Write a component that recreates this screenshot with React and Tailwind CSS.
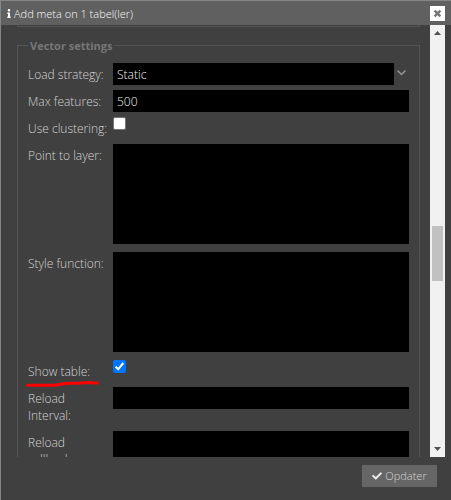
import React from "react";
import { FaInfo, FaCheck } from "react-icons/fa";

function Row({ label, height, children }) {
  return (
    <div className={`flex shrink-0 items-start ${height}`}>
      <div className="w-[85px] shrink-0 pt-[3px] pr-1 leading-[17px]">{label}</div>
      {children}
    </div>
  );
}

function Field({ value, className = "h-[22px] w-[296px]" }) {
  return <div className={`bg-black px-1 leading-[23px] text-[#f0f0f0] ${className}`}>{value}</div>;
}

function Checkbox({ checked }) {
  return (
    <div
      className={`size-[13px] rounded-[2px] ${checked ? "bg-[#0075ff]" : "border border-[#767676] bg-white"}`}
    >
      {checked && (
        <svg viewBox="0 0 13 13" className="block size-[13px]">
          <path d="M2.6 6.6 L5.2 9.3 L10.3 3" fill="none" stroke="#fff" strokeWidth="2" />
        </svg>
      )}
    </div>
  );
}

function Scrollbar() {
  return (
    <div className="flex h-[432px] w-[15px] shrink-0 flex-col items-center bg-[#f1f1f1]">
      <svg viewBox="0 0 15 15" className="size-[15px] shrink-0">
        <path d="M4 10 L7.5 6 L11 10 Z" fill="#505050" />
      </svg>
      <div className="mt-[186px] -ml-px h-[55px] w-[11px] bg-[#c1c1c1]" />
      <svg viewBox="0 0 15 15" className="mt-auto size-[15px] shrink-0">
        <path d="M4 5 L7.5 9 L11 5 Z" fill="#505050" />
      </svg>
    </div>
  );
}

export default function App() {
  return (
    <div className="flex h-[500px] w-[451px] flex-col overflow-hidden border-t border-l border-[#858786] bg-[#404040] font-['Open_Sans','Noto_Sans',sans-serif] text-[12px] font-light text-[#d4d4d4]">
      <div className="flex h-6 shrink-0 items-center bg-[#606060] pr-[6px] pl-[5px] text-[11px] text-[#fafafa]">
        <FaInfo className="h-[9px] w-[6px] text-white" />
        <span className="ml-[2px] pt-px leading-4">Add meta on 1 tabel(ler)</span>
        <div className="mt-[5px] ml-auto flex size-[15px] items-center justify-center self-start bg-white">
          <svg viewBox="0 0 9 9" className="size-[9px]">
            <path d="M1.6 1.6 L7.4 7.4 M7.4 1.6 L1.6 7.4" stroke="#777" strokeWidth="2.4" />
          </svg>
        </div>
      </div>

      <div className="flex h-[432px] shrink-0">
        <div className="flex w-[429px] shrink-0 flex-col overflow-hidden pl-4">
          <div className="h-[2px] w-[403px] shrink-0 border-x border-b border-[#555]" />
          <fieldset className="mt-[10px] h-[500px] w-[403px] shrink-0 border border-[#555] pl-[10px]">
            <legend className="px-[2px] text-[11px] leading-[17px] font-bold text-[#777]">Vector settings</legend>
            <div className="flex flex-col pt-[9px]">
              <Row label="Load strategy:" height="h-[27px]">
                <Field value="Static" className="h-[22px] w-[281px]" />
                <svg viewBox="0 0 15 22" className="h-[22px] w-[15px]">
                  <path d="M3.5 7.5 L7.5 11.5 L11.5 7.5" fill="none" stroke="#999" strokeWidth="1.3" />
                </svg>
              </Row>
              <Row label="Max features:" height="h-[27px]">
                <Field value="500" />
              </Row>
              <Row label="Use clustering:" height="h-[27px]">
                <Checkbox />
              </Row>
              <Row label="Point to layer:" height="h-[108px]">
                <Field className="h-[100px] w-[296px]" />
              </Row>
              <Row label="Style function:" height="h-[108px]">
                <Field className="h-[100px] w-[296px]" />
              </Row>
              <Row
                label={
                  <span className="relative">
                    Show table:
                    <svg viewBox="0 0 76 8" className="absolute top-[16px] -left-[4px] h-2 w-[76px]">
                      <path
                        d="M3.5 6.3 H31 C37 5.5 39 4.3 45 4.3 C53 4.1 60 3.8 65 3.6 C68 3.8 70 4.2 73.3 4.1"
                        fill="none"
                        stroke="#ff0000"
                        strokeWidth="3"
                        strokeLinecap="round"
                      />
                    </svg>
                  </span>
                }
                height="h-[27px]"
              >
                <Checkbox checked />
              </Row>
              <Row label="Reload Interval:" height="h-[44px]">
                <Field />
              </Row>
              <Row label="Reload callback:" height="h-[44px]">
                <Field className="h-[44px] w-[296px]" />
              </Row>
            </div>
          </fieldset>
        </div>
        <Scrollbar />
      </div>

      <div className="flex shrink-0 justify-end pt-2 pr-[14px]">
        <button className="flex h-[22px] w-[75px] items-center justify-center gap-[3px] bg-[#666] text-[11px] text-[#d4d4d4]">
          <FaCheck className="size-[10px] text-[#eee]" />
          Opdater
        </button>
      </div>
    </div>
  );
}
